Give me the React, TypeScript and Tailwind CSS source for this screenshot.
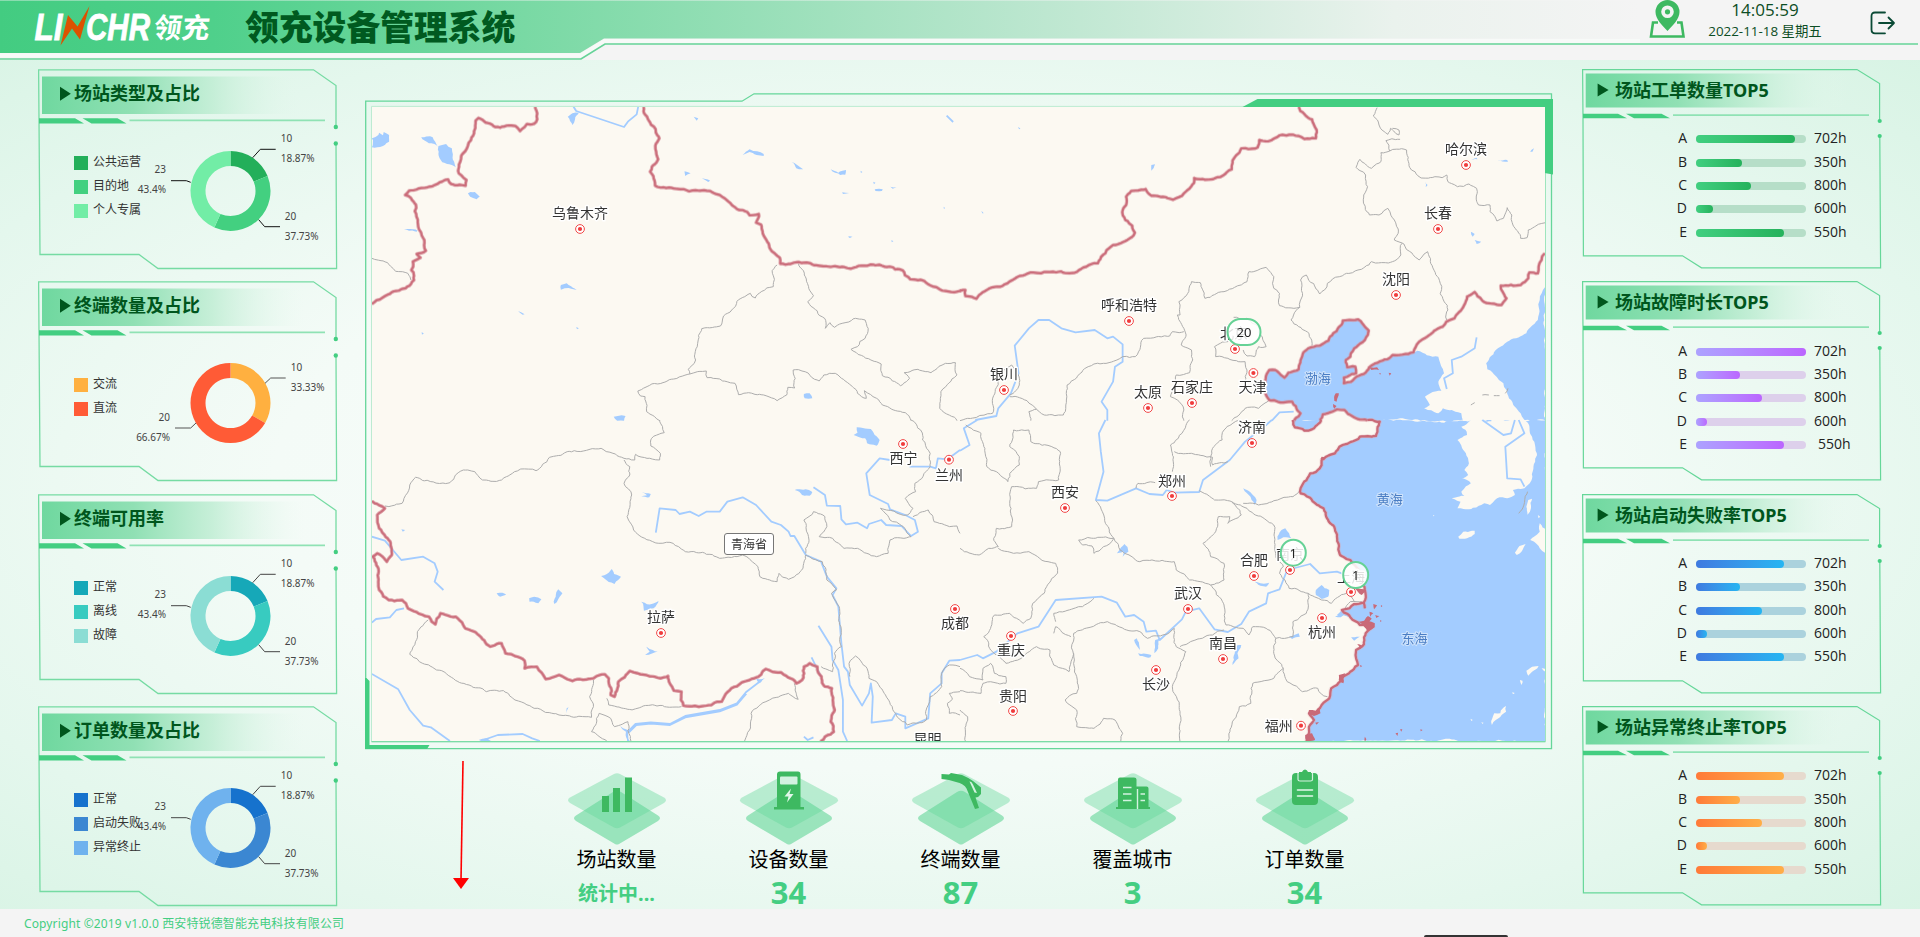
import React from "react";

const FONT = "font-['Noto_Sans','Noto_Sans_CJK_SC',sans-serif]";

/* ---------------------------------------------------------------- data */

type Slice = { name: string; value: number; color: string };
type Callout = { line: string; x: number; y: number; end?: boolean; value: string; pct: string };

const threeCallouts: Callout[] = [
  { line: "214.7,88.7 222.3,80.3 237.7,80.3", x: 242.7, y: 73, value: "10", pct: "18.87%" },
  { line: "220.7,150.7 226.7,157.7 242,157.7", x: 246.7, y: 151, value: "20", pct: "37.73%" },
  { line: "152.7,113.3 148.3,111.7 133,111.7", x: 128, y: 104, end: true, value: "23", pct: "43.4%" },
];
const twoCallouts: Callout[] = [
  { line: "227,102.3 232.7,97 247.7,97", x: 252.7, y: 90, value: "10", pct: "33.33%" },
  { line: "158,142 152.7,147 137,147", x: 132, y: 139.7, end: true, value: "20", pct: "66.67%" },
];

const donutPanels: { title: string; slices: Slice[]; callouts: Callout[]; stroke: string }[] = [
  {
    title: "场站类型及占比",
    slices: [
      { name: "公共运营", value: 10, color: "#23af5a" },
      { name: "目的地", value: 20, color: "#43d080" },
      { name: "个人专属", value: 23, color: "#72eda6" },
    ],
    callouts: threeCallouts,
    stroke: "#111",
  },
  {
    title: "终端数量及占比",
    slices: [
      { name: "交流", value: 10, color: "#ffb040" },
      { name: "直流", value: 20, color: "#ff5b36" },
    ],
    callouts: twoCallouts,
    stroke: "#555",
  },
  {
    title: "终端可用率",
    slices: [
      { name: "正常", value: 10, color: "#16a8b8" },
      { name: "离线", value: 20, color: "#38cbc0" },
      { name: "故障", value: 23, color: "#8bddd4" },
    ],
    callouts: threeCallouts,
    stroke: "#444",
  },
  {
    title: "订单数量及占比",
    slices: [
      { name: "正常", value: 10, color: "#1672cd" },
      { name: "启动失败", value: 20, color: "#3b87d2" },
      { name: "异常终止", value: 23, color: "#6fb2ee" },
    ],
    callouts: threeCallouts,
    stroke: "#444",
  },
];

const names = ["A", "B", "C", "D", "E"];
const hours = ["702h", "350h", "800h", "600h", "550h"];

const barPanels = [
  { title: "场站工单数量TOP5", track: "bg-[#b6dec8]", fill: "from-[#41cf80] to-[#25b25c]", widths: [90, 42, 50, 15, 80], indentLast: false },
  { title: "场站故障时长TOP5", track: "bg-[#ddd0eb]", fill: "from-[#aca2ff] to-[#bb66ff]", widths: [100, 40, 60, 10, 80], indentLast: true },
  { title: "场站启动失败率TOP5", track: "bg-[#abd2dd]", fill: "from-[#3f7ae0] to-[#25b5f2]", widths: [80, 40, 60, 10, 80], indentLast: false },
  { title: "场站异常终止率TOP5", track: "bg-[#e6dace]", fill: "from-[#ff7a38] to-[#ffae48]", widths: [80, 40, 60, 10, 80], indentLast: false },
];

/* -------------------------------------------------------------- panels */

function LeftFrame() {
  return (
    <svg className="absolute inset-0" width="304" height="204" fill="none">
      <defs>
        <linearGradient id="lf">
          <stop offset="0" stopColor="#6fd89f" />
          <stop offset="0.35" stopColor="#90e0b4" />
          <stop offset="0.65" stopColor="#bfedd3" stopOpacity="0.85" />
          <stop offset="1" stopColor="#e6f8ee" stopOpacity="0" />
        </linearGradient>
      </defs>
      <rect x="4" y="7.5" width="262" height="37.5" fill="url(#lf)" />
      <path d="M298 58V16.5L275.5.8H.6L1 50 2 185.5H101L120 199.5H298.6L298 74.5" stroke="#76dba3" strokeWidth="1.3" />
      <path d="M1 49.3H37L46 54.6H1ZM44.5 49.3H79.5L88.5 54.6H53.5Z" fill="#43ce81" />
      <path d="M91.5 51.3H287" stroke="#8fe2b4" strokeWidth="1.8" />
      <circle cx="297.8" cy="58" r="2.2" fill="#43ce81" />
      <circle cx="297.8" cy="74.5" r="2.2" fill="#43ce81" />
      <path d="M22 17.7 32.8 24.7 22 31.7Z" fill="#00561d" />
    </svg>
  );
}

function RightFrame() {
  return (
    <svg className="absolute inset-0" width="304" height="204" fill="none">
      <rect x="3.7" y="4.5" width="262" height="34" fill="url(#lf)" />
      <path d="M297.6 52V14.6L275 .6H.6L1 48 1.4 186.8H100.5L119.5 198.8H298.6L297.8 67" stroke="#66d799" strokeWidth="1.2" />
      <path d="M1 44.8H36L45 49.2H1ZM44 44.8H79.5L88 49.2H52Z" fill="#43ce81" />
      <path d="M91 46.2H287" stroke="#8fe2b4" strokeWidth="1.8" />
      <circle cx="297.7" cy="52" r="2.1" fill="#43ce81" />
      <circle cx="297.7" cy="67" r="2.1" fill="#43ce81" />
      <path d="M15.6 14.5 26.6 21 15.6 27.5Z" fill="#00561d" />
    </svg>
  );
}

function arc(a0: number, a1: number) {
  const p = (a: number, r: number) => `${192.5 + r * Math.sin(a)} ${122 - r * Math.cos(a)}`;
  const big = a1 - a0 > Math.PI ? 1 : 0;
  return `M${p(a0, 40)}A40 40 0 ${big} 1 ${p(a1, 40)}L${p(a1, 25)}A25 25 0 ${big} 0 ${p(a0, 25)}Z`;
}

function DonutPanel({ title, slices, callouts, stroke }: (typeof donutPanels)[number]) {
  const total = slices.reduce((s, d) => s + d.value, 0);
  let angle = 0;
  return (
    <section className="relative h-[200px] w-[300px]">
      <LeftFrame />
      <h2 className="relative pt-[11px] pl-9 text-lg leading-[27px] font-bold text-[#00561d]">{title}</h2>
      <ul className={`relative flex flex-col gap-2.5 pl-9 ${slices.length === 2 ? "pt-[59px]" : "pt-[49px]"}`}>
        {slices.map((s) => (
          <li key={s.name} className="flex h-3.5 items-center gap-[5px] text-xs leading-none text-[#333]">
            <span className="size-3.5" style={{ background: s.color }} />
            <span className="-mt-0.5">{s.name}</span>
          </li>
        ))}
      </ul>
      <svg className="absolute inset-0" width="300" height="200">
        {slices.map((s) => {
          const a0 = angle;
          angle += (s.value / total) * Math.PI * 2;
          return <path key={s.name} d={arc(a0, angle)} fill={s.color} />;
        })}
        {callouts.map((c) => (
          <g key={c.pct} fontSize="10" fill="#444" textAnchor={c.end ? "end" : "start"}>
            <polyline points={c.line} fill="none" stroke={stroke} strokeWidth="1" />
            <text x={c.x} y={c.y}>{c.value}</text>
            <text x={c.x} y={c.y + 20}>{c.pct}</text>
          </g>
        ))}
      </svg>
    </section>
  );
}

function BarPanel({ title, track, fill, widths, indentLast }: (typeof barPanels)[number]) {
  return (
    <section className="relative h-[200px] w-[300px]">
      <RightFrame />
      <h2 className="relative pt-2 pl-[33px] text-lg leading-[27px] font-bold text-[#00561d]">{title}</h2>
      <div className="relative flex flex-col pt-[23.7px]">
        {names.map((n, i) => (
          <div key={n} className="flex h-[23.33px] items-center font-['Open_Sans','Noto_Sans',sans-serif] text-sm leading-none text-[#222]">
            <span className="-mt-0.5 w-[105px] text-right">{n}</span>
            <div className={`ml-[9px] h-2 w-[110px] rounded-full ${track}`}>
              <div className={`h-full rounded-full bg-linear-to-r ${fill}`} style={{ width: `${widths[i]}%` }} />
            </div>
            <span className={`-mt-0.5 ${i === 4 && indentLast ? "ml-3" : "ml-2"}`}>{hours[i]}</span>
          </div>
        ))}
      </div>
    </section>
  );
}

/* ----------------------------------------------------------------- map */

type Tile = { at: string; sea: string; land: string; water: string; border: string; river: string; nation: string; isles: string };

const tiles: Tile[] = [
  {
    at: "translate(-12 -27) scale(.38267 .33333)",
    sea: "",
    land: "",
    water:
      "M31 175 48 165 50 158 60 166 62 156 76 165 76 185 60 198 31 202ZM160 172 190 172 197 186 203 200 180 190ZM205 198 225 192 240 205 246 245 250 262 240 255 215 247 208 235ZM282 340 300 336 313 350 305 358 288 350ZM543 110 555 100 572 98 562 118 555 135ZM525 615 540 610 566 630 545 624 525 629ZM1160 942 1175 940 1182 955 1162 955ZM663 1010 694 1008 690 1022 672 1022ZM1000 225 1018 208 1055 222 1055 228 1018 216ZM1128 246 1158 268 1140 265ZM1230 268 1250 278 1270 270 1268 284 1255 285ZM848 274 864 280 850 288ZM893 295 915 302 910 306ZM1345 328 1366 328 1364 333 1347 333ZM1386 320 1402 322 1392 326ZM1260 337 1278 339 1262 342ZM872 110 884 115 880 122ZM1275 470 1287 470 1280 474ZM565 741 572 745 567 748ZM161 757 167 760 162 764ZM413 693 430 703 425 704ZM1308 272 1313 276 1309 279ZM1388 481 1394 483 1390 487ZM1525 380 1529 384 1526 387ZM115 447 150 452 148 455 128 452ZM1341 305 1347 308 1343 313Z",
    border:
      "M1090 555 1077 572 1083 598 1080 620 1050 634 1033 654 1020 640 985 664 950 708 942 738 893 746 877 840 858 868 862 882 757 916 726 933 733 948 745 950 749 995 770 1010 783 1022M862 882 905 873 907 893 940 897 980 910 989 944 1015 938 1055 945 1090 962 1115 945 1118 922 1136 924 1132 870 1155 873 1200 903 1212 885 1242 880 1300 940 1323 955 1318 932 1350 955 1365 975 1400 992 1425 998 1440 1022M1146 551 1185 647 1170 665 1200 706 1215 716 1216 745 1228 728 1240 742 1260 730 1295 715 1320 720 1328 745 1320 775 1300 800 1283 808 1335 840 1362 852 1365 887 1412 917 1436 895 1422 878 1458 868 1492 878 1530 850 1556 848 1560 885 1518 935 1515 985 1560 1022M31 535 72 548 93 574 125 580 133 600",
    river: "M558 80 565 93 690 141 700 125 723 103 727 80M1533 107 1550 126",
    nation:
      "M457 80 463 100 463 118 455 131 436 132 418 153 406 138 366 143 345 134 309 114 302 122 290 180 262 245 258 280 278 300 276 317 238 312 230 298 195 315 160 324 128 332 118 345 133 354 146 374 152 440 168 480 172 512 148 522 158 533 138 545 134 570 141 600 133 612 112 626 88 634 60 652 31 672M741 80 750 110 768 140 782 175 772 207 779 238 758 275 771 317 800 324 860 334 915 333 940 345 975 378 1018 406 1042 402 1035 428 1048 434 1062 480 1070 503 1097 533 1098 551 1146 546 1200 557 1283 566 1310 557 1357 554 1418 571 1438 598 1475 603 1515 628 1545 636 1570 632",
    isles: "",
  },
  {
    at: "translate(588 -27) scale(.38267 .33333)",
    sea:
      "M808 960 798 940 797 905 808 870 828 873 848 893 858 878 885 868 895 825 910 805 963 782 975 760 1000 722 1040 718 1068 752 1058 780 1030 805 1020 830 1008 840 1012 862 1033 860 1035 880 1003 893 1003 910 1055 882 1085 850 1130 825 1185 817 1195 812 1220 826 1250 830 1255 850 1265 880 1250 905 1258 932 1235 936 1215 950 1228 975 1213 985 1250 1000 1262 985 1285 990 1310 1000 1315 1021 1065 1021 1030 1012 1005 990 985 988 948 1003 940 1021 873 1021 890 1000 868 965 830 965ZM1530 620 1515 660 1510 720 1480 760 1430 785 1400 810 1375 850 1378 868 1420 910 1440 960 1465 1000 1475 1021 1530 1021Z",
    land: "",
    water:
      "M1215 305 1222 315 1217 322ZM1335 455 1345 462 1340 470ZM500 255 510 253 500 272ZM1345 480 1362 485 1350 492ZM1336 240 1350 233 1352 238ZM1404 242 1430 240 1432 245ZM1490 215 1500 205 1496 215ZM1282 350 1276 346ZM152 140 158 146 154 148ZM56 392 62 400 58 400Z",
    border:
      "M1090 83 1080 108 1095 135 1118 163 1125 145 1147 165 1147 150 1130 145M1150 178 1113 182 1123 213 1167 210 1175 262 1205 294 1260 293 1272 285 1275 305 1300 320 1330 312 1350 325 1355 375 1385 375 1385 395 1403 423 1420 415 1430 383 1442 405 1445 435 1465 475 1482 473 1485 450 1530 428M1123 213 1100 218 1100 245 1075 265 1045 238 1035 262 1060 285 1065 320 1055 345 1070 405 1095 405 1118 385 1135 420 1145 460 1135 480 1160 492 1200 540 1222 515 1230 550 1255 610 1255 640 1275 690 1272 720M1155 490 1152 525 1130 545 1075 545 1040 570 1010 580 960 610 940 642 905 585 890 600 895 640 888 682 865 720 885 740 912 760 920 797M888 682 835 677 835 640 820 625 820 590 800 562 755 575 750 605 690 635 640 655 628 608 605 605 595 640 572 665 575 705 568 705 585 745 590 770 578 795 605 810 608 840 600 878 565 885 565 910 550 950 568 960 585 990 585 1022M585 755 555 755 548 768 480 775 458 830 425 830 410 840 375 850 350 852 335 860 280 915 278 960 270 1005 220 1005 200 988 180 995 185 1022M130 950 175 962 200 988M0 1022 85 1000 92 935 115 870 135 855 150 880 155 915 130 945M715 712 750 715 780 740 790 770 800 800 780 800 770 830 750 828 740 810M700 760 700 785 665 800 668 830 700 835 745 845 750 870 745 915M808 960 780 985 745 985 710 1022M1365 945 1382 945M1395 947 1410 947M1425 940 1432 925M1335 975 1345 968",
    river:
      "M40 1020 95 1008 100 985 133 940 153 880 143 797 180 745 205 720 233 720 265 745 302 757 352 750 385 775 400 770 425 793 425 845 405 860 400 905 370 965 385 990 385 1022M815 1022 835 997 872 995M1350 772 1345 805 1310 830 1285 840 1288 880 1265 895 1272 927",
    nation:
      "M0 632 14 630 14 648 43 656 50 645 148 592 185 577 235 576 300 578 330 560 360 550 400 495 437 480 457 458 450 437 432 420 424 397 434 375 434 350 447 333 485 327 500 347 557 359 585 340 605 318 612 294 640 299 680 291 710 268 712 242 735 205 778 202 782 180 805 184 835 166 870 164 900 177 930 175 932 150 920 118 885 80M873 1021 890 1000 868 965 830 965 808 960 798 940 797 905 808 870 828 873 848 893 858 878 885 868 895 825 910 805 963 782 975 760 1000 722 1040 718 1068 752 1058 780 1030 805 1020 830 1008 840 1012 862 1033 860 1035 880 1003 893 1003 910 1055 882 1085 850 1130 825 1185 817 1200 785 1250 745 1292 715 1320 670 1325 650 1345 636 1365 662 1415 675 1428 655 1413 617 1465 615 1485 595 1488 577 1510 580 1512 560 1528 520M940 1021 948 1003 985 988 1005 990 1030 1012 1065 1021",
    isles: "M982 940 990 940 984 965 978 962ZM1070 862 1090 862 1095 870 1075 870ZM1120 878 1127 880 1123 887ZM1095 880 1100 880 1098 884ZM975 972 984 978 978 986Z",
  },
  {
    at: "translate(-12 313) scale(.38267 .33333)",
    sea: "",
    land: "",
    water:
      "M1290 45 1300 38 1298 22 1335 27 1345 45 1358 60 1350 77 1325 70 1320 55ZM630 468 645 462 658 447 664 462 682 470 665 492 650 486ZM735 545 750 553 780 543 772 560 742 572ZM736 216 760 222 756 232 735 229 750 226ZM357 520 372 518 382 524 366 530ZM442 535 455 530 474 538 466 550 443 545ZM518 508 529 520 518 538 508 552 506 545ZM1136 210 1165 208 1182 216 1175 227 1155 225ZM1035 775 1058 775 1045 790ZM748 680 765 690 778 695 765 700 745 705 757 695ZM108 328 118 330 112 335ZM540 865 545 862 538 880ZM310 960 330 955 350 965ZM680 918 700 930 705 963 698 963 695 935Z",
    border:
      "M65 258 110 250 130 195 145 172 185 185 235 188 270 150 300 155 320 180 370 180 420 147 460 152 495 112 560 92 630 85 690 115 718 120 720 103 750 115 783 120 785 100 760 78 762 55 795 38 783 0M690 120 705 140 705 165 690 190 710 225 698 290 715 330 765 365 810 367 850 395 895 397 940 415 1000 405 1040 440 1045 470 1090 485 1095 460 1120 478 1150 455 1165 405M178 600 150 635 145 665 130 703 155 725 200 750 285 795 330 815 375 812 405 840 455 865 520 885 605 892 610 860 600 830 610 780M645 835 650 855 700 868 740 858 840 860M605 935 625 880 655 895 665 920 700 905 708 963M605 935 645 963M1135 790 1140 820 1145 838 1120 820 1070 840 1022 880 1018 930 1005 963M1165 405 1208 425 1220 480 1245 510 1232 520 1252 560 1258 680 1240 700 1235 755 1205 740M1280 770 1278 730 1295 708 1325 745 1330 775 1350 785 1370 820 1400 880 1430 915 1480 900 1490 830 1520 800 1520 760 1540 735 1568 740M1440 0 1465 30 1470 60 1490 100 1490 140 1450 190 1452 215 1425 235 1445 265 1430 285 1360 265 1385 300 1420 320 1440 350 1385 360 1380 400 1350 410 1300 385 1265 385 1235 355 1200 350 1220 320 1215 290 1185 275 1160 300 1172 350 1165 400M1445 290 1485 270 1500 305 1560 318 1568 340M1568 815 1540 820 1548 838 1535 850 1540 880 1568 885",
    river:
      "M773 338 783 265 825 270 835 282 862 275 885 288 905 275 940 275 960 245 1000 232 1035 255 1075 305 1100 315 1120 335 1125 348 1135 348 1165 405 1205 425 1220 470 1245 505 1235 525 1250 560 1258 670 1265 740 1275 755 1280 795 1312 857 1330 820 1335 790 1340 830 1337 908 1390 900 1400 880 1425 890 1425 925 1485 895 1490 820 1520 790 1520 760 1540 722 1568 720M1198 617 1232 680 1235 720 1250 750 1262 840 1262 935 1273 963M1180 712 1205 770M31 350 65 362 108 420 165 410 195 430 203 455 195 485 218 510M31 608 42 597 78 592 95 570 115 565M31 762 100 808 130 870 165 917 185 922 235 963M315 963 360 945 425 942 450 955 470 963M700 935 720 912 760 907 810 912 850 888 940 870 985 850 1010 815 1050 780M702 938 722 915 760 911 810 915 850 892 940 874 985 854 1010 820M1160 950 1170 960 1185 952M1185 202 1215 225 1220 257 1255 258 1258 298 1270 313 1300 308 1325 325 1330 312 1362 300 1375 315 1415 318 1440 348 1458 335 1450 300 1425 285 1385 268 1380 252 1332 225 1323 160 1358 115 1385 120M1436 140 1490 140 1505 145 1510 115 1535 118 1568 90",
    nation:
      "M31 243 65 265 45 285 50 325 72 355 83 405 70 425 45 400 33 410 48 460 50 510 75 540 110 540 125 565 180 590 197 613 210 580 250 590 275 625 310 645 340 680 370 670 380 700 430 722 430 745 462 740 485 777 520 765 555 783 610 775 640 763 650 775 655 825 665 830 675 785 705 753 785 775 805 768 820 812 840 815 845 857 905 857 945 845 970 805 1030 775 1060 747 1100 757 1140 790 1155 780 1160 740 1175 730 1195 740 1215 800 1233 805 1240 870 1230 905 1238 935 1215 950 1203 965",
    isles: "",
  },
  {
    at: "translate(588 313) scale(.38267 .33333)",
    sea:
      "M1065 0 1097 5 1087 48 1045 50 1000 75 980 100 945 120 940 145 915 160 890 205 890 220 950 265 985 350 993 405 1020 420 1035 440 1050 470 1058 510 1055 548 1030 552 998 570 985 585 1000 585 1020 592 1045 615 1080 620 1060 640 1050 680 1035 690 1040 735 1020 755 1000 770 985 795 970 805 965 835 945 855 930 880 912 880 925 900 912 930 905 966 1532 966 1532 0ZM869 0 875 22 900 32 925 25 944 0Z",
    land:
      "M1310 -1 1335 0 1310 20 1325 45 1300 60 1322 100 1330 130 1318 150 1328 165 1310 175 1335 190 1310 215 1318 228 1285 235 1308 245 1300 265 1330 268 1370 250 1385 255 1410 232 1430 235 1450 225 1445 210 1475 205 1495 175 1503 125 1495 50 1475 -1ZM1302 350 1315 335 1345 332 1345 342 1325 355 1305 356ZM1480 260 1485 240 1495 236 1492 265 1483 284ZM1500 350 1515 335 1515 310 1532 330 1532 400 1515 385 1505 370 1490 360ZM1450 398 1462 378 1478 372 1470 390 1455 405ZM1480 752 1495 740 1512 738 1495 755 1485 767ZM1390 915 1396 880 1412 880 1427 858 1427 875 1400 900ZM1463 780 1470 782 1467 795ZM1443 817 1450 819 1445 823ZM1520 745 1532 748 1530 755ZM1510 285 1516 290 1512 295ZM1362 907 1368 908 1366 912ZM1334 896 1340 900 1336 903ZM1236 285 1240 287 1237 289Z",
    water:
      "M930 510 945 495 965 510 962 530 945 537 930 525ZM840 330 850 325 860 340 866 355 845 352 830 360ZM770 485 785 490 808 488 800 500 785 497ZM740 205 750 210 775 240 770 255 762 240ZM715 680 735 675 725 700 728 715 712 735 718 700ZM980 590 1000 575 1005 580 995 592ZM510 660 522 655 518 685 508 700ZM465 700 500 705 498 712 470 708ZM410 400 430 372 440 395 425 410 428 395ZM860 650 885 640 888 650 868 657ZM1022 652 1045 650 1030 662ZM455 660 462 655 470 690Z",
    border:
      "M15 15 55 40 65 85 70 140 95 155 125 185 130 160 155 135 155 110 130 80 140 30 180 30 185 65 240 80 262 95 258 180 205 185 200 205 135 200 130 250 135 320 95 325 88 355 100 380 75 385 50 405 0 385M100 385 140 400 180 395 230 425 250 430 255 460 220 520 190 550 185 595 165 610 130 580 90 585 80 625 62 650 80 690 120 730 160 715 200 680 235 690 245 735 285 755 295 710 297 640 340 622 385 605 430 628 470 635 490 655M355 242 372 275 380 310 402 355 360 352 310 360 320 375 345 378 350 400 375 380 402 355 430 400 470 425 560 425 565 450 600 480 655 495 690 555 695 615 740 625M245 640 250 620 290 650M250 605 245 580 320 560 350 535M460 205 465 190 510 188M555 155 555 100 550 75 580 40 600 0M560 95 605 100 660 112 660 135 700 125M655 140 655 110 660 85 685 60 690 30 730 0M625 212 665 240 710 245 735 285 700 310 705 290 675 290 665 340 635 370 655 410 690 430 690 480 655 495M710 245 750 265 820 315 825 400 845 440 835 460 860 505 910 520 945 540 970 550 1010 520 1030 545M740 250 780 255 830 240 870 230 890 205M910 520 905 580 870 605 870 650 825 655 820 700 845 745 855 785 895 815 935 805 960 830M845 745 820 775 765 790 760 850 730 860 715 900 700 965M740 625 755 645 765 620 800 625 825 655M490 655 530 645 560 625 565 680 590 695 575 740 555 800 575 880 575 965M575 680 660 645 690 630M297 700 305 770 305 820 275 840 305 870 305 920 350 925 375 895 405 900 425 940 420 965M0 745 25 770 60 780 60 745 80 730 90 760 120 770 120 790 60 790 55 820 0 812M0 870 20 890 15 965M1483 215 1460 280M1000 575 1020 545 1050 545",
    river:
      "M380 0 363 40 368 95 375 155 355 240 385 242 460 205 495 222 530 225 540 210 560 218 625 216 635 180 670 150 705 120 745 65 800 15 815 0M0 720 45 705 60 715 95 695 150 640 205 620 250 540 370 530 410 548 432 590 455 585 480 605 487 635 512 632 522 660 580 598 590 575 625 565 665 628 700 636 735 612 755 575 800 550 805 520 835 508 855 450 915 432 940 460 985 455 1020 470M0 92 25 75 10 25 45 0M1365 0 1420 45 1440 40 1450 0M1460 0 1475 40 1425 80 1430 175 1465 178 1475 200",
    nation:
      "M1065 0 1097 5 1087 48 1045 50 1000 75 980 100 945 120 940 145 915 160 890 205 890 220 950 265 985 350 993 405 1020 420 1035 440 1050 470 1058 510 1055 548 1058 565M1055 548 1030 552 998 570 1020 592 1045 615 1080 620 1060 640 1050 680 1035 690 1040 735 1020 755 1000 770 985 795 970 805 965 835 945 855 930 880 912 880 925 900 912 930 905 966M869 0 875 22 900 32 925 25 944 0",
    isles:
      "M1030 505 1062 510 1050 525ZM1042 605 1056 602 1066 588 1076 596 1070 604 1084 610 1083 622 1064 634 1056 620ZM1080 552 1090 556 1082 568ZM1100 555 1104 558 1100 562ZM1070 575 1080 580 1072 590ZM1098 600 1102 603 1098 606ZM1085 585 1096 588 1088 594ZM990 765 1006 760 1002 790 990 780ZM912 870 930 872 942 860 942 880 925 888 910 878ZM902 945 920 940 928 960 905 963ZM1138 940 1145 938 1143 948ZM1150 928 1156 928 1153 935ZM1203 928 1209 930 1204 934ZM1058 950 1062 958 1058 965ZM1045 735 1051 738 1047 742ZM945 110 955 112 948 120 942 116ZM1038 672 1055 678 1045 688ZM928 908 938 906 932 914Z",
  },
];

/* Splits each segment into short steps nudged by a position-based hash, so shared edges stay aligned in both directions. */
function jitter(x: number, y: number, amp: number) {
  const s = Math.sin(Math.round(x * 2) * 12.9898 + Math.round(y * 2) * 78.233) * 43758.5453;
  return (s - Math.floor(s) - 0.5) * 2 * amp;
}
function split(ax: number, ay: number, bx: number, by: number, amp: number): [number, number][] {
  const len = Math.hypot(bx - ax, by - ay);
  if (len < 11) return [];
  const mx = (ax + bx) / 2;
  const my = (ay + by) / 2;
  const a = Math.min(amp, len * 0.12);
  const x = mx + jitter(mx, my, a);
  const y = my + jitter(my + 17, mx, a);
  return [...split(ax, ay, x, y, amp), [x, y], ...split(x, y, bx, by, amp)];
}
function detail(d: string, amp: number) {
  return d
    .split("M")
    .filter(Boolean)
    .map((part) => {
      const closed = part.endsWith("Z");
      const n = part.replace("Z", "").trim().split(" ").map(Number);
      const pts: [number, number][] = [];
      for (let i = 0; i < n.length; i += 2) pts.push([n[i], n[i + 1]]);
      if (closed) pts.push(pts[0]);
      const out: [number, number][] = [pts[0]];
      for (let i = 1; i < pts.length; i++) {
        out.push(...split(pts[i - 1][0], pts[i - 1][1], pts[i][0], pts[i][1], amp), pts[i]);
      }
      return "M" + out.map(([x, y]) => `${x.toFixed(1)} ${y.toFixed(1)}`).join(" ") + (closed ? "Z" : "");
    })
    .join("");
}

type LayerProps = { k: keyof Omit<Tile, "at">; fill?: string; stroke?: string; w?: number; o?: number; amp?: number };
function Layer({ k, fill = "none", stroke = "none", w = 1, o = 1, amp = 0 }: LayerProps) {
  return (
    <g fill={fill} stroke={stroke} strokeWidth={w} strokeLinejoin="round" opacity={o}>
      {tiles.map((t, i) => (
        <g key={i} transform={t.at}>
          <path d={amp ? detail(t[k], amp) : t[k]} vectorEffect="non-scaling-stroke" />
        </g>
      ))}
    </g>
  );
}

/* name, marker x, marker y, label x, label centre y */
const cities: [string, number, number, number, number][] = [
  ["乌鲁木齐", 580, 229, 580, 213],
  ["哈尔滨", 1466, 165, 1466, 149],
  ["长春", 1438, 229, 1438, 213],
  ["沈阳", 1396, 295, 1396, 279],
  ["呼和浩特", 1129, 321, 1129, 305],
  ["北京", 1235, 349, 1234, 333],
  ["天津", 1253.4, 373, 1252.5, 387],
  ["石家庄", 1192, 403, 1192, 387],
  ["太原", 1148, 408, 1148, 392],
  ["银川", 1004, 390, 1004, 374],
  ["济南", 1252, 443, 1252, 427],
  ["郑州", 1172, 496, 1172, 480.5],
  ["西安", 1065, 508, 1065, 492],
  ["合肥", 1254, 576, 1254, 560],
  ["南京", 1290, 570, 1290, 554],
  ["上海", 1351, 592, 1351, 577],
  ["武汉", 1188, 609, 1188, 593],
  ["杭州", 1322, 618, 1322, 632],
  ["南昌", 1223, 659, 1223, 643],
  ["重庆", 1011, 636, 1011, 650],
  ["长沙", 1156, 670, 1156, 684],
  ["贵阳", 1013, 711, 1013, 695.5],
  ["福州", 1301, 725.7, 1278.8, 725.7],
  ["西宁", 903, 444, 903.5, 458],
  ["兰州", 949, 459.7, 949, 474.5],
  ["成都", 955, 609, 955, 623],
  ["拉萨", 661, 633, 661, 617],
  ["昆明", 927.5, 760, 927.5, 738.5],
];
const seas: [string, number, number][] = [
  ["渤海", 1317.8, 378],
  ["黄海", 1389.7, 498.5],
  ["东海", 1414.6, 637.5],
];
const clusters: [string, number, number, number][] = [
  ["20", 1244, 332, 33],
  ["1", 1293.3, 552.7, 25],
  ["1", 1355.7, 575, 25],
];

function ChinaMap() {
  return (
    <svg width="1173" height="634" viewBox="0 0 1173 634" className="block overflow-hidden">
      <rect width="1173" height="634" fill="#fcf9f2" />
      <Layer k="sea" fill="#a3ccff" amp={4} />
      <Layer k="land" fill="#fcf9f2" amp={5} />
      <Layer k="water" fill="#a3ccff" amp={3} />
      <Layer k="river" stroke="#a3ccff" w={1.8} />
      <Layer k="border" stroke="#adadad" w={1} amp={4} />
      <Layer k="nation" stroke="#e0a3aa" w={3.4} o={0.6} amp={4} />
      <Layer k="nation" stroke="#c96a78" w={2.2} amp={4} />
      <Layer k="isles" fill="#c96a78" amp={4} />
      <g transform="translate(-372 -107)" textAnchor="middle">
        <g fontSize="14" fill="#333" stroke="#fff" strokeWidth="3" strokeLinejoin="round" paintOrder="stroke">
          {cities.map(([n, , , x, y]) => (
            <text key={n} x={x} y={y + 5.2}>{n}</text>
          ))}
        </g>
        <g fontSize="13" fill="#4a7dc4" stroke="#cfe3fb" strokeWidth="2" paintOrder="stroke">
          {seas.map(([n, x, y]) => (
            <text key={n} x={x} y={y + 5}>{n}</text>
          ))}
        </g>
        {cities.map(([n, x, y]) => (
          <g key={n}>
            <circle cx={x} cy={y} r="4.4" fill="#fff" stroke="#f04848" strokeWidth="1" />
            <circle cx={x} cy={y} r="2.1" fill="#f03c3c" />
          </g>
        ))}
        <rect x="724.5" y="533.5" width="49" height="21" rx="2.5" fill="#fff" stroke="#777" />
        <text x="749" y="548.5" fontSize="12" fill="#333">青海省</text>
        {clusters.map(([n, x, y, w], i) => (
          <g key={i}>
            <rect x={x - w / 2} y={y - 13} width={w} height="26" rx="13" fill="#fff" fillOpacity="0.85" stroke="#66d296" strokeWidth="2" />
            <text x={x} y={y + 5} fontSize="13" fill="#222">{n}</text>
          </g>
        ))}
      </g>
    </svg>
  );
}

function MapFrame() {
  return (
    <div className="relative pt-[14px] pl-[7px]">
      <svg className="absolute inset-0" width="1190" height="660" fill="none">
        <path d="M.7 8.2H377L389 .8H1186.5V655.7H.7Z" stroke="#66d69a" strokeWidth="1.3" />
        <path d="M6.5 648.8V13.4H1180V648.8Z" stroke="#bdebd2" />
        <path d="M6.5 648.6H1180V80" stroke="#7bdca6" strokeWidth="1.2" />
        <path d="M877.5 14 892.5 6H1188V81.5L1179.5 80V14Z" fill="#43ce81" />
        <path d="M0 585H1.5L4.5 588V652H64.5L62 656H0Z" fill="#43ce81" />
      </svg>
      <div className="relative">
        <ChinaMap />
      </div>
    </div>
  );
}

/* --------------------------------------------------------------- stats */

const G = "#3eb961";
const statIcons: React.ReactNode[] = [
  <path key="bars" d="M35 23h7v16h-7zM46 15h7v24h-7zM58 4.500h7v34.500h-7z" fill={G} />,
  <g key="charger">
    <path d="M38 1.500Q38-1.500 41-1.500H59Q61.500-1.500 61.500 1.500V34H65V36.500H35V34H38Z" fill={G} />
    <rect x="41" y="3.500" width="17.500" height="8" rx="1" fill="#d3f2e0" />
    <path d="M52 15.500 45.500 23.500H49.500L48 29.500 54.500 21H50.500Z" fill="#e2f7ea" />
  </g>,
  <g key="gun">
    <path d="M30.500 1 38 1.500 40 0 51 2Q58 5 62 8L70 14.500V21L67 24 64.500 24.500 68 35 64 36 55.500 15.500Q53 10.500 45 9L38 7 30.500 6Z" fill={G} />
    <path d="M58.500 8.500Q60.500 8 62 11.500L66 20 63.500 19.500Z" fill="#d3f2e0" />
  </g>,
  <g key="city">
    <path d="M35 6.500Q35 4.500 37 4.500H51Q53.500 4.500 53.500 6.500V13.500H63.500Q65.500 13.500 65.500 15.500V34H67V36H33V34H35Z" fill={G} />
    <path d="M40 14.500H48.500M40 21H48.500M40 27.500H48.500M57.500 21H62M57.500 27.500H62M54.500 16V36" stroke="#d3f2e0" strokeWidth="1.4" />
  </g>,
  <g key="clip">
    <rect x="37" y="0" width="26" height="32" rx="4" fill={G} />
    <path d="M43 0V6.500Q43 8 45 8H55.500Q57.500 8 57.500 6.500V0" fill="none" stroke="#d3f2e0" strokeWidth="1.2" />
    <path d="M44-1H47Q48-3.500 50-3.500T53-1H56V6H44Z" fill={G} />
    <path d="M42.500 17H57.500M42.500 23H57.500" stroke="#e2f7ea" strokeWidth="1.6" strokeLinecap="round" />
  </g>,
];
const stats = [
  ["场站数量", "统计中..."],
  ["设备数量", "34"],
  ["终端数量", "87"],
  ["覆盖城市", "3"],
  ["订单数量", "34"],
];

function Stats() {
  return (
    <div className="flex pl-[165.5px]">
      {stats.map(([label, value], i) => (
        <div key={label} className="flex w-[172px] flex-col items-center">
          <svg width="100" height="78" viewBox="0 -6 100 78" className="block overflow-visible">
            <path d="M9 42.500 46 19Q50 16.500 54 19L91 42.500Q95 45 91 48L52 71Q50 72 48 71L9 48Q5 45 9 42.500Z" fill="#5dd494" fillOpacity="0.58" />
            <path d="M3 24.500 47 1Q50-.5 53 1L97 24.500Q101 27 97 30L53 54.500Q50 56 47 54.500L3 30Q-1 27 3 24.500Z" fill="#62d698" fillOpacity="0.4" />
            {statIcons[i]}
          </svg>
          <div className="mt-[1px] text-xl leading-7 text-black">{label}</div>
          <div className={`-mt-0.5 font-bold text-[#44ce82] ${i === 0 ? "pt-1 text-xl leading-9" : "text-[31px] leading-10"}`}>{value}</div>
        </div>
      ))}
    </div>
  );
}

/* -------------------------------------------------------------- header */

function Header() {
  return (
    <header className="relative flex h-[60px] shrink-0 bg-[#f4f4f4]">
      <svg className="absolute inset-0" width="1920" height="60" fill="none">
        <defs>
          <linearGradient id="hd">
            <stop offset="0" stopColor="#43cc81" />
            <stop offset="0.13" stopColor="#4fd08b" />
            <stop offset="0.32" stopColor="#79d9a4" />
            <stop offset="0.6" stopColor="#b5e5cb" />
            <stop offset="0.85" stopColor="#eaf2ed" />
            <stop offset="1" stopColor="#f4f4f4" />
          </linearGradient>
        </defs>
        <path d="M0 0H1640V38.500H604L580 53H0Z" fill="url(#hd)" />
        <path d="M0 .5H1640" stroke="#f4f4f4" strokeOpacity="0.4" />
        <path d="M0 55.500H581L605 41H1640" stroke="#f7faf8" strokeWidth="4" />
        <path d="M0 59H581L605 44H1918" stroke="#66d398" strokeWidth="1.7" />
        <g fill="#fff" fontFamily="Liberation Sans" fontWeight="700" fontStyle="italic" fontSize="36" stroke="#fff" strokeWidth="0.8">
          <text x="34.500" y="40" textLength="28" lengthAdjust="spacingAndGlyphs">LI</text>
          <text x="86" y="40" textLength="64" lengthAdjust="spacingAndGlyphs">CHR</text>
        </g>
        <path d="M60.500 45.500 68 15 77.500 26.500 89.500 6 80 39.500 72 28.500Z" fill="#dc5200" />
        <text x="0" y="0" transform="translate(152.500 37.500) skewX(-8)" fill="#fff" fontSize="28" fontWeight="700">领充</text>
      </svg>
      <h1 className="relative flex h-[56px] items-center pl-[245px] text-[33.8px] leading-none font-black text-[#005a20]">领充设备管理系统</h1>
      <svg className="relative mt-0 ml-auto" width="36" height="40" fill="none">
        <path d="M18.500 0A12 12 0 0 0 6.500 12C6.500 19 13 25 18.500 31 24 25 30.500 19 30.500 12A12 12 0 0 0 18.500 0ZM18.500 5.500A6.300 6.300 0 1 1 18.500 18.100 6.300 6.300 0 0 1 18.500 5.500Z" fill={G} fillRule="evenodd" />
        <circle cx="18.500" cy="11.800" r="2.600" fill={G} />
        <path d="M9 22.500H4L2 36.500H34.500L32.500 22.500H28" stroke={G} strokeWidth="2.600" />
      </svg>
      <div className="relative ml-[17px] w-[126px] text-center font-['Open_Sans','Noto_Sans_CJK_SC',sans-serif] text-[#0c4d24]">
        <div className="pt-px text-[17px] leading-[18px]">14:05:59</div>
        <div className="pt-[3px] text-[13.4px] leading-[18px] whitespace-nowrap">2022-11-18 星期五</div>
      </div>
      <svg className="relative mt-[11px] mr-6 ml-[42px]" width="26" height="26" fill="none" stroke="#0a4a35" strokeWidth="1.800" strokeLinecap="round" strokeLinejoin="round">
        <path d="M15 1.500H5Q1.500 1.500 1.500 5V18.500Q1.500 22.300 5 22.300H15M9 12H24M18.500 6.500 24 12 18.500 17.500" />
      </svg>
    </header>
  );
}

export default function App() {
  return (
    <div className={`relative flex h-[937px] w-[1920px] flex-col overflow-hidden bg-[#f4f4f4] ${FONT}`}>
      <Header />
      <main className="relative flex h-[849px] shrink-0 bg-[radial-gradient(ellipse_75%_75%_at_48%_50%,#f9fdfb_0%,#f4fbf7_45%,#e4f7ed_75%,#d6f3e3_100%)]">
        <div className="flex flex-col gap-[12.4px] pt-[9px] pl-[38px]">
          {donutPanels.map((p) => (
            <DonutPanel key={p.title} {...p} />
          ))}
        </div>
        <div className="flex w-[1217px] flex-col gap-[26px] pt-[33px] pl-[27px]">
          <MapFrame />
          <Stats />
        </div>
        <div className="flex flex-col gap-[12.3px] pt-[9px] pl-[27px]">
          {barPanels.map((p) => (
            <BarPanel key={p.title} {...p} />
          ))}
        </div>
        <svg className="absolute top-[700px] left-[450px]" width="24" height="132">
          <path d="M13 1 11 120" stroke="#f00" strokeWidth="1.600" />
          <path d="M3 118H19L11 129Z" fill="#f00" />
        </svg>
      </main>
      <footer className="flex h-7 shrink-0 items-center bg-[#f4f4f4] pt-0.5 pl-6 text-xs tracking-[0.13px] text-[#44ce82]">
        Copyright ©2019 v1.0.0 西安特锐德智能充电科技有限公司
      </footer>
      <div className="absolute bottom-0 left-[1424px] h-0.5 w-[84px] rounded-t bg-[#333]" />
    </div>
  );
}
